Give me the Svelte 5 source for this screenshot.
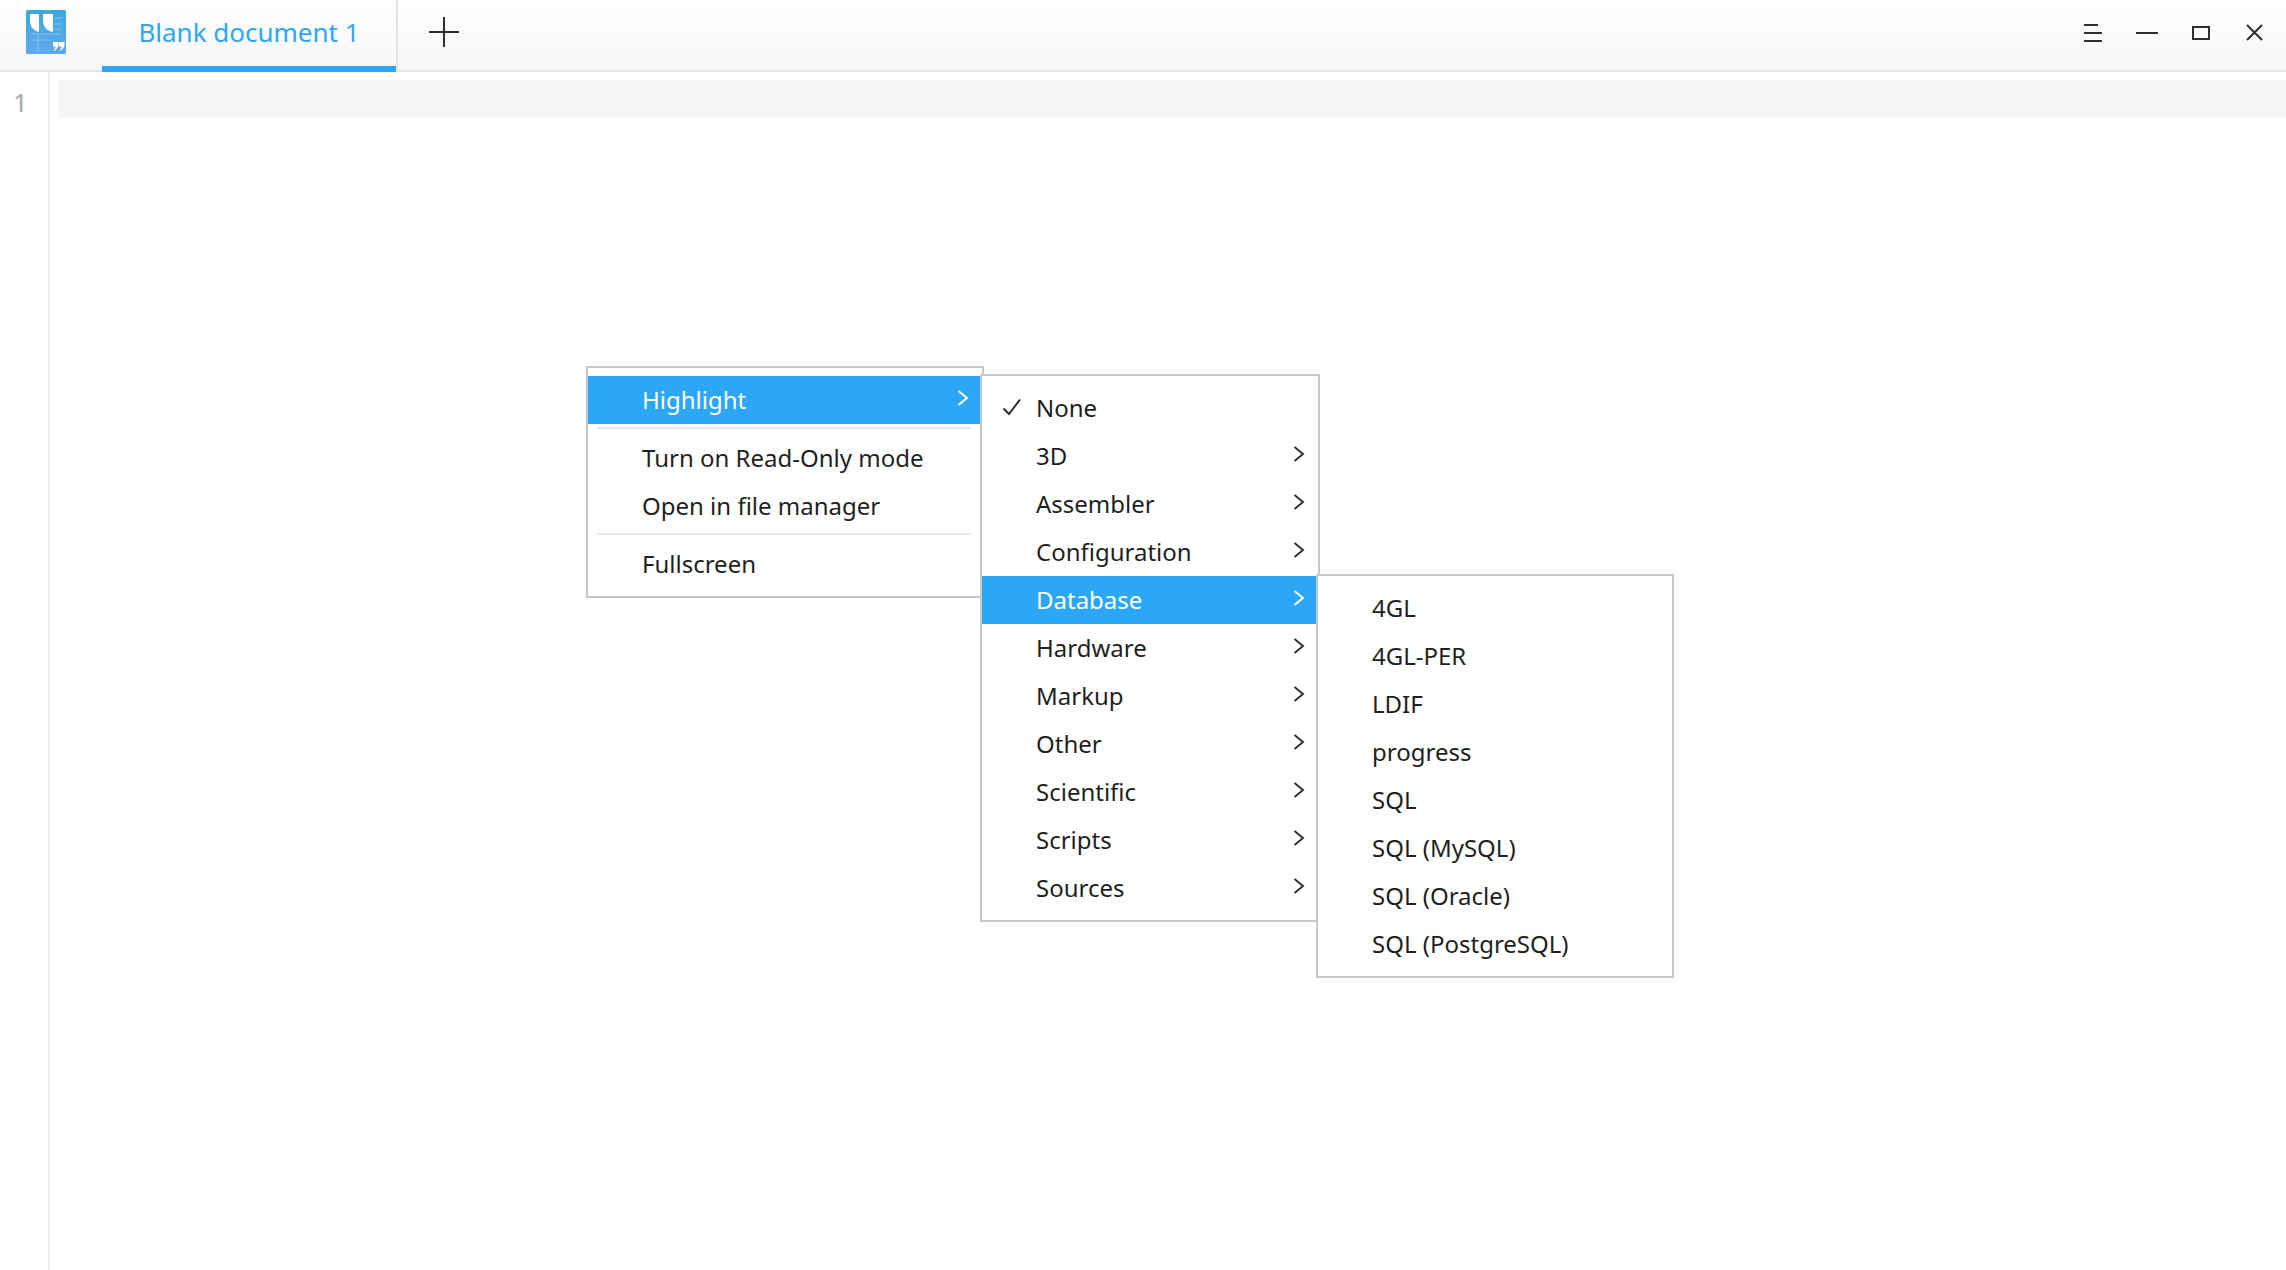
<script>
  const m1a = [{ t: 'Highlight', active: true, sub: true }];
  const m1b = [{ t: 'Turn on Read-Only mode' }, { t: 'Open in file manager' }];
  const m1c = [{ t: 'Fullscreen' }];
  const m2 = [
    { t: 'None', check: true }, { t: '3D', sub: true }, { t: 'Assembler', sub: true },
    { t: 'Configuration', sub: true }, { t: 'Database', sub: true, active: true },
    { t: 'Hardware', sub: true }, { t: 'Markup', sub: true }, { t: 'Other', sub: true },
    { t: 'Scientific', sub: true }, { t: 'Scripts', sub: true }, { t: 'Sources', sub: true }
  ];
  const m3 = ['4GL', '4GL-PER', 'LDIF', 'progress', 'SQL', 'SQL (MySQL)', 'SQL (Oracle)', 'SQL (PostgreSQL)'].map((t) => ({ t }));
</script>

{#snippet row(item)}
  <div class="row" class:active={item.active}>
    {#if item.check}
      <svg class="check" viewBox="0 0 20 20" width="20" height="20"><path d="M1.5 10.5 L7 16 L18 1.5" fill="none" stroke="#2f2f2f" stroke-width="2" /></svg>
    {/if}
    <span>{item.t}</span>
    {#if item.sub}
      <svg class="chev" viewBox="0 0 12 16" width="12" height="16"><path d="M1.5 1 L10 8 L1.5 15" fill="none" stroke={item.active ? '#fff' : '#2f2f2f'} stroke-width="2" /></svg>
    {/if}
  </div>
{/snippet}

<div class="window">
  <header class="titlebar">
    <div class="logo-cell">
      <svg width="40" height="44" viewBox="0 0 40 44">
        <defs><linearGradient id="lg" x1="0" y1="0" x2="0" y2="1"><stop offset="0" stop-color="#3ba9de" /><stop offset="1" stop-color="#63a8ee" /></linearGradient></defs>
        <rect width="40" height="44" rx="1.5" fill="url(#lg)" />
        <path d="M5 24H34M28 8H36M28 14H36M28 19H36M5 30H24M12 25V42" stroke="#fff" stroke-opacity=".2" stroke-width="1.5" />
        <path d="M4 4H13V22Q5 20 4 12Z M17 4H27V22Q18 20 17 12Z" fill="#fff" />
        <path d="M27 32H32.5V35Q32 39 27.5 41Q29.5 38 29.5 36.5H27Z M33 32H38.5V35Q38 39 33.5 41Q35.5 38 35.5 36.5H33Z" fill="#fff" />
      </svg>
    </div>
    <div class="tab">Blank document 1</div>
    <div class="add">
      <svg width="30" height="30" viewBox="0 0 30 30"><path d="M15 0V30M0 15H30" stroke="#2c2c2c" stroke-width="2" /></svg>
    </div>
    <div class="spacer"></div>
    <div class="controls">
      <svg width="18" height="18" viewBox="0 0 18 18"><path d="M0 1H14M0 9H18M0 17H18" stroke="#2f2f2f" stroke-width="2" /></svg>
      <svg width="22" height="18" viewBox="0 0 22 18"><path d="M0 9H22" stroke="#2f2f2f" stroke-width="2" /></svg>
      <svg width="18" height="14" viewBox="0 0 18 14"><rect x="1" y="1" width="16" height="12" fill="none" stroke="#2f2f2f" stroke-width="2" /></svg>
      <svg class="close" width="17" height="17" viewBox="0 0 17 17"><path d="M1 1L16 16M16 1L1 16" stroke="#2f2f2f" stroke-width="2" /></svg>
    </div>
  </header>
  <main class="editor">
    <div class="gutter">1</div>
    <div class="content"><div class="line"></div></div>
  </main>

  <div class="menu m1">
    {#each m1a as it}{@render row(it)}{/each}
    <div class="sep"></div>
    {#each m1b as it}{@render row(it)}{/each}
    <div class="sep"></div>
    {#each m1c as it}{@render row(it)}{/each}
  </div>
  <div class="menu m2">
    {#each m2 as it}{@render row(it)}{/each}
  </div>
  <div class="menu m3">
    {#each m3 as it}{@render row(it)}{/each}
  </div>
</div>

<style>
  :global(body) { margin: 0; background: #fff; }
  .window { position: relative; width: 2286px; height: 1270px; overflow: hidden; background: #fff; font-family: "Noto Sans", sans-serif; }
  .titlebar { display: flex; align-items: stretch; height: 70px; border-bottom: 2px solid #e4e4e4; background: linear-gradient(#ffffff, #f7f7f7); box-sizing: content-box; }
  .logo-cell { width: 102px; display: flex; justify-content: flex-start; padding: 10px 0 0 26px; box-sizing: border-box; }
  .tab { width: 294px; height: 72px; margin-bottom: -2px; box-sizing: border-box; border-bottom: 6px solid #2ca7f8; color: #2ca7f8; font-size: 26px; display: flex; align-items: center; justify-content: center; padding-bottom: 3px; flex: none; }
  .add { width: 94px; border-left: 2px solid #e4e4e4; box-sizing: border-box; display: flex; align-items: center; justify-content: center; padding-bottom: 6px; }
  .spacer { flex: 1; }
  .controls { display: flex; align-items: center; gap: 34px; padding: 0 23px 5px 0; }
  .close { margin-left: 2px; }
  .editor { display: flex; height: 1198px; }
  .gutter { border-right: 2px solid #eeeeee; color: #a8a8a8; font-size: 26px; padding: 12px 0 0 13px; box-sizing: border-box; width: 50px; }
  .content { flex: 1; padding: 8px 0 0 8px; }
  .line { height: 38px; background: #f7f6f5; }
  .menu { position: absolute; box-sizing: border-box; border: 2px solid #c8c8c8; background: #fff; padding: 8px 0; color: #1f1f1f; font-size: 24px; }
  .m1 { left: 586px; top: 366px; width: 398px; height: 232px; }
  .m2 { left: 980px; top: 374px; width: 340px; height: 548px; }
  .m3 { left: 1316px; top: 574px; width: 358px; height: 404px; }
  .row { position: relative; height: 48px; display: flex; align-items: center; padding: 0 0 2px 54px; box-sizing: border-box; white-space: nowrap; }
  .row.active { background: #2ca7f8; color: #fff; }
  .chev { position: absolute; right: 13px; top: 14px; }
  .check { position: absolute; left: 20px; top: 14px; }
  .sep { height: 2px; background: #e6e6e6; margin: 3px 11px 5px 9px; }
</style>
